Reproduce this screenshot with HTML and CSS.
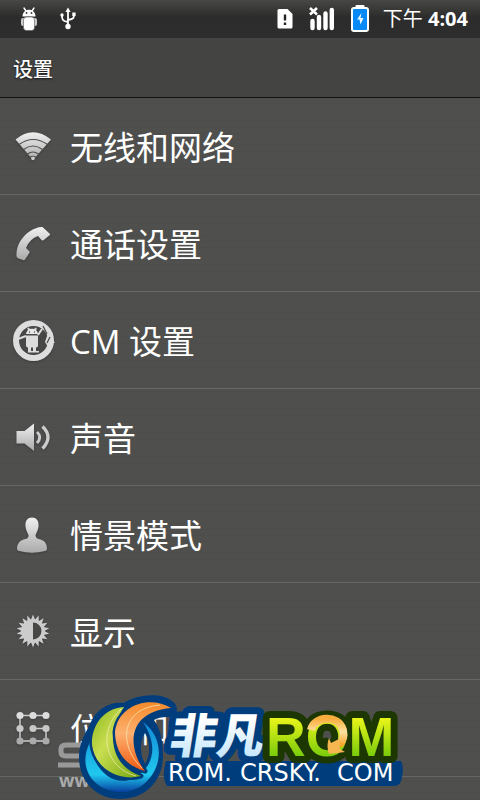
FILE: index.html
```
<!DOCTYPE html>
<html lang="zh-CN">
<head>
<meta charset="utf-8">
<meta name="viewport" content="width=device-width, initial-scale=1">
<title>设置</title>
<link rel="stylesheet" href="styles.css">
</head>
<body>
<div class="status">
  <div class="status-group status-left">
    <svg width="18" height="26" viewBox="20 7 18 26" aria-hidden="true">
      <path d="M24 9l2 3M34 9l-2 3" stroke="#fff" stroke-width="1.4" stroke-linecap="round"/>
      <path d="M22.5 17.5c0-9 13-9 13 0z" fill="#fff"/>
      <circle cx="26.500" cy="14" r=".9" fill="#333"/><circle cx="31.500" cy="14" r=".9" fill="#333"/>
      <rect x="21" y="19" width="16" height="8" rx="2" fill="#ccc"/>
      <rect x="23.500" y="18" width="11" height="13.500" rx="3" fill="#fff" stroke="#555" stroke-width=".6"/>
    </svg>
    <svg width="18" height="24" viewBox="59 7 18 24" aria-hidden="true">
      <path d="M68 11v15M68 22c-6-1-6-3-6-7M68 20c6-1 6-2 6-6" fill="none" stroke="#fff" stroke-width="1.800"/>
      <path d="M68 7.500l2.600 4.500h-5.200z" fill="#fff"/><circle cx="68" cy="26.500" r="2.700" fill="#fff"/>
      <circle cx="62" cy="15" r="1.700" fill="#fff"/><rect x="72.300" y="12.500" width="3.300" height="3.500" fill="#fff"/>
    </svg>
  </div>
  <div class="status-group status-right">
    <svg width="16" height="20" viewBox="275 9 16 20" aria-hidden="true">
      <path d="M277 9h8.500l5 5v13q0 1.500-1.500 1.500h-12q-1.500 0-1.500-1.500V10.500q0-1.500 1.500-1.500z" fill="#fff"/>
      <path d="M283 14.500v6M283 22.500v2.500" stroke="#222" stroke-width="2.400"/>
    </svg>
    <svg width="26" height="24" viewBox="309 7 26 24" aria-hidden="true">
      <path d="M312.500 21v7M319 17v11M325.500 13.500v14.500M331.800 10v18" stroke="#fff" stroke-width="4.400" stroke-linecap="round"/>
      <path d="M310 8l7 6.500M317 8l-7 6.500" stroke="#fff" stroke-width="2.500"/>
    </svg>
    <svg width="18" height="28" viewBox="350 6 18 28" aria-hidden="true">
      <rect x="354.500" y="6" width="9" height="4" rx="1" fill="#fff"/>
      <rect x="351" y="9" width="16" height="23" rx="2" fill="#078af7" stroke="#fff" stroke-width="2"/>
      <path d="M360.500 14l-4.500 6.500h2.500l1 5 3-6.500h-3z" fill="#e8f6ff"/>
    </svg>
    <span class="clock">下午 <b>4:04</b></span>
  </div>
</div>
<header class="title-bar"><h1>设置</h1></header>
<main>
<svg class="defs" aria-hidden="true"><defs>
  <linearGradient id="metal" x1="0" y1="0" x2="0" y2="1"><stop offset="0" stop-color="#f0f0f0"/><stop offset="1" stop-color="#aaa"/></linearGradient>
</defs></svg>
<ul class="list">
  <li><a href="#wireless">
    <svg class="icon" viewBox="12 126 44 44" aria-hidden="true">
      <path d="M15.500 139.500q17.500-14.500 35.500 0l-18 20.500z" fill="url(#metal)"/>
      <path d="M19 144.500q14-10 28.500 0M23.500 149.500q9.500-7 19 0M27.500 154q5.500-4 11 0M30 157.500q3-2.500 6 0" fill="none" stroke="#4f504e" stroke-width="1.200"/>
      <circle cx="33" cy="158.500" r="1.800" fill="#ccc"/>
    </svg><span>无线和网络</span></a></li>
  <li><a href="#call">
    <svg class="icon" viewBox="12 223 44 44" aria-hidden="true">
      <path d="M16.500 256c-.500-10 5-19 13-24.500 5-3.500 10-5 13-4.500l7 6.500q1 1 0 1.800l-6 5q-1 .7-2-.3l-3.500-4q-8 2.500-12 12l3 3q1 1 .3 2l-4.300 6.500q-.8 1-2 .5l-5-1.800q-1.500-.7-1.500-2.200z" fill="url(#metal)"/>
    </svg><span>通话设置</span></a></li>
  <li><a href="#cm">
    <svg class="icon" viewBox="12 320 44 44" aria-hidden="true">
      <circle cx="33.500" cy="340.500" r="17.500" fill="#474846" stroke="#ddd" stroke-width="6"/>
      <path d="M48 333l7 10h-4l-1 7-5-8z" fill="#ddd"/>
      <path d="M28 328l2 3M36 328l-1.500 3M26 336l-8 3M38 335l4-6" stroke="#ddd" stroke-width="2"/>
      <path d="M26 334c1-7 11-7 12 0z" fill="#e8e8e8"/><circle cx="29.500" cy="332" r=".7" fill="#444"/><circle cx="34.500" cy="332" r=".7" fill="#444"/>
      <path d="M26 335.500h12v10q0 2-2 2v3.500h-3v-3.500h-2v3.500h-3V347.500q-2 0-2-2zM28 351h11v1.500H28z" fill="#ddd"/>
      <path d="M43 326l4 8M50 337l-3 6" stroke="#474846" stroke-width="1.200"/>
    </svg><span>CM 设置</span></a></li>
  <li><a href="#sound">
    <svg class="icon" viewBox="12 417 44 44" aria-hidden="true">
      <path d="M16.500 431h8l9.500-7.500v27.500l-9.500-7.500h-8z" fill="url(#metal)"/>
      <path d="M37 432q5.500 5 0 11" fill="none" stroke="#ccc" stroke-width="3"/>
      <path d="M42.500 426.500q11 10.500 0 22" fill="none" stroke="#ccc" stroke-width="3.400"/>
    </svg><span>声音</span></a></li>
  <li><a href="#profiles">
    <svg class="icon" viewBox="12 514 44 44" aria-hidden="true">
      <path d="M32 517.500c5 0 7 4 6.500 9-.5 4-2 6-3 8.500 0 3 2 4 5 4.500 5 1.500 6.500 5 6.500 9.500q0 1.500-2 2-13 3.500-26 0-2-.5-2-2c0-4.500 2-8 6.500-9.500 3-.5 5.500-1.500 5-4.500-1-2.500-2.500-4.500-3-8.500-.5-5 1.500-9 6.500-9z" fill="url(#metal)"/>
    </svg><span>情景模式</span></a></li>
  <li><a href="#display">
    <svg class="icon" viewBox="12 611 44 44" aria-hidden="true">
      <g id="rays" fill="#ccc">
        <path id="ray" d="M30.500 621L33 614.500l2.500 6.500v20L33 647.500l-2.500-6.500z"/>
        <use href="#ray" transform="rotate(20 33 631)"/><use href="#ray" transform="rotate(40 33 631)"/>
        <use href="#ray" transform="rotate(60 33 631)"/><use href="#ray" transform="rotate(80 33 631)"/>
        <use href="#ray" transform="rotate(100 33 631)"/><use href="#ray" transform="rotate(120 33 631)"/>
        <use href="#ray" transform="rotate(140 33 631)"/><use href="#ray" transform="rotate(160 33 631)"/>
      </g>
      <circle cx="33" cy="631" r="11.500" fill="#ccc"/>
      <path d="M33 622.500a8.500 8.500 0 0 1 0 17z" fill="#474846"/>
    </svg><span>显示</span></a></li>
  <li><a href="#security">
    <svg class="icon" viewBox="12 708 44 44" aria-hidden="true">
      <path d="M46 715.500H20v25.500h26v-12.500H33" fill="none" stroke="#ccc" stroke-width="1.500"/>
      <g fill="#ddd"><circle cx="20" cy="715.500" r="3.600"/><circle cx="33" cy="715.500" r="3.600"/><circle cx="46" cy="715.500" r="3.600"/></g>
      <g fill="#c8c8c8"><circle cx="20" cy="728.500" r="3.600"/><circle cx="33" cy="728.500" r="3.600"/><circle cx="46" cy="728.500" r="3.600"/></g>
      <g fill="#aaa"><circle cx="20" cy="741" r="3.600"/><circle cx="33" cy="741" r="3.600"/><circle cx="46" cy="741" r="3.600"/></g>
    </svg><span>位置和安全</span></a></li>
</ul>
</main>
<svg class="brand" viewBox="50 690 360 110" role="img" aria-label="非凡ROM rom.crsky.com">
  <defs>
    <linearGradient id="lime" x1="0" y1="0" x2="0" y2="1"><stop offset=".2" stop-color="#e9f51a"/><stop offset=".85" stop-color="#71c90a"/></linearGradient>
    <linearGradient id="leaf" x1="0" y1="0" x2="1" y2="1"><stop offset="0" stop-color="#8cb51c"/><stop offset=".4" stop-color="#c8de50"/><stop offset="1" stop-color="#75a511"/></linearGradient>
    <linearGradient id="flame" x1="0" y1="0" x2="0" y2="1"><stop offset="0" stop-color="#f58a2a"/><stop offset=".45" stop-color="#fdb070"/><stop offset="1" stop-color="#f05a10"/></linearGradient>
    <linearGradient id="sea" x1="0" y1="0" x2="0" y2="1"><stop offset="0" stop-color="#1289d6"/><stop offset=".75" stop-color="#20c8ee"/><stop offset="1" stop-color="#0740a0"/></linearGradient>
    <linearGradient id="ice" x1="0" y1="0" x2="0" y2="1"><stop offset=".3" stop-color="#fff"/><stop offset="1" stop-color="#b5e0fb"/></linearGradient>
    <linearGradient id="gold" x1="0" y1="0" x2="0" y2="1"><stop offset="0" stop-color="#f8ad3c"/><stop offset=".5" stop-color="#ffe1a0"/><stop offset="1" stop-color="#f5a72c"/></linearGradient>
  </defs>
  <path d="M81 745H66q-5 0-5 4v3q0 4 5 4h18M58 765h28" fill="none" stroke="#999" stroke-width="5"/>
  <text class="site" x="59" y="787">www</text>
  <path fill-rule="evenodd" fill="#003d7c" d="M79 757C79 742 86 733 90 724 96 709 110 701 124 703c12-9 38-11 48-2 8 5 6 17-5 16-5 0-10 1-13 3 6 8 9 20 9 35 0 27-18 44-43 44-24 0-41-18-41-42zM145 733c-4 6-5 14-3 24l3 7c5-8 6-20 0-31z"/>
  <path d="M90 742c-14 28 6 51 33 50 34-2 50-48 20-70 18 27 8 50-14 58-19 5-36-12-39-38z" fill="url(#sea)"/>
  <g stroke="#003d7c" stroke-width="5" stroke-linejoin="round" class="petal">
    <path d="M124 707C102 708 91 728 92 745c3 23 26 37 49 31C115 767 103 740 124 707z" fill="url(#leaf)"/>
    <path d="M171 708C150 695 118 705 115 732c0 20 11 34 30 39C128 750 125 712 171 708z" fill="url(#flame)"/>
  </g>
  <path d="M121 709C96 733 106 768 136 776M160 705C118 709 120 748 142 768" fill="none" stroke="#f8edb8" stroke-opacity=".7"/>
  <path d="M166 761h235q3 6 1 16-1 9-8 9H167q-6-9-1-25z" fill="#003d7c"/>
  <text class="hanzi" transform="translate(168 753) skewX(-9)">非凡</text>
  <path d="M326 742l18 8-9 7z" stroke="#1d3703" stroke-width="9" stroke-linejoin="round"/>
  <text class="rom" x="266" y="756">ROM</text>
  <path d="M311 730C314 716 338 714 343 730q2 9-4 15" fill="none" stroke="url(#gold)" stroke-width="8"/>
  <path d="M329 738l2 5 8-4 1 10 5 3-16 2q-3-8 0-16z" fill="#f7b750"/>
  <text class="domain" y="781"><tspan x="168">ROM.</tspan><tspan x="240">CRSKY.</tspan><tspan x="337">COM</tspan></text>
</svg>
</body>
</html>
```
FILE: styles.css
```
* { box-sizing: border-box; }
body {
  margin: 0;
  height: 100vh;
  overflow: hidden;
  position: relative;
  display: flex;
  flex-direction: column;
  color: #fff;
  background: #4f504e;
  font-family: "Open Sans", "Noto Sans CJK SC", sans-serif;
}
svg { display: block; flex: none; }
.status {
  display: flex;
  justify-content: space-between;
  align-items: center;
  height: 38px;
  padding: 0 12px 0 20px;
  background: linear-gradient(#474745, #2c2c2c 45%, #2d2d2d);
}
.status-group { display: flex; align-items: center; }
.status-left { gap: 21px; }
.status-right { gap: 16px; }
.clock { font-size: 20px; line-height: 38px; margin-left: -2px; white-space: nowrap; }
.title-bar {
  height: 60px;
  padding: 2px 13px 0;
  border-bottom: 1px solid #111;
  background: #444543;
}
h1 {
  margin: 0;
  font-size: 20px;
  line-height: 60px;
  font-weight: 500;
  text-shadow: 0 1px 2px #111;
}
main {
  flex: 1;
  min-height: 0;
  background: repeating-linear-gradient(#4f504e 0 5px, #4d4e4c 5px 6px);
}
.defs { position: absolute; width: 0; height: 0; }
.list { list-style: none; margin: 0; padding: 0; }
.list li { border-bottom: 1px solid #666866; }
.list a {
  display: flex;
  align-items: center;
  gap: 14px;
  height: 96px;
  padding: 4px 12px 0;
  color: inherit;
  text-decoration: none;
  font-size: 33px;
  line-height: 48px;
  font-weight: 400;
  white-space: nowrap;
}
.icon { width: 44px; height: 44px; filter: drop-shadow(0 1px 1px #3a3a3a); }
.brand { position: absolute; left: 50px; bottom: 0; width: 360px; height: 110px; }
.petal { paint-order: stroke; }
.site { font: bold 18px "Open Sans", sans-serif; fill: #aaa; }
.hanzi {
  font: 900 47px "Noto Sans CJK SC", sans-serif;
  fill: url(#ice);
  stroke: #003d7c;
  stroke-width: 14px;
  stroke-linejoin: round;
  paint-order: stroke;
}
.rom {
  font: bold 55px "Liberation Sans", sans-serif;
  fill: url(#lime);
  stroke: #1d3703;
  stroke-width: 14px;
  stroke-linejoin: round;
  paint-order: stroke;
}
.domain { font: 24px "DejaVu Sans", sans-serif; fill: #fff; }
```
